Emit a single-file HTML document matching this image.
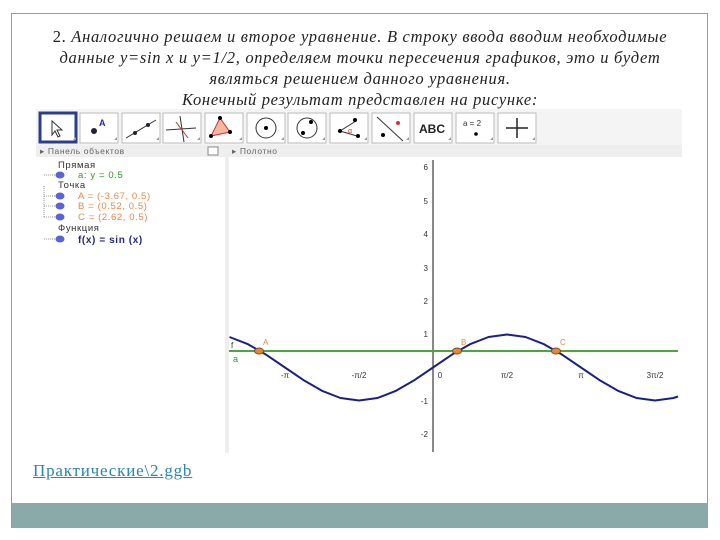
<!DOCTYPE html>
<html><head><meta charset="utf-8"><style>
body{margin:0;width:720px;height:540px;background:#fff;position:relative;overflow:hidden;font-family:"Liberation Sans",sans-serif}
.frame{position:absolute;left:11px;top:13px;width:697px;height:515px;border:1px solid #9a9a9a;border-bottom:none;box-sizing:border-box}
.bar{position:absolute;left:12px;top:503px;width:696px;height:25px;background:#8aa9a9}
.title{position:absolute;left:0px;width:720px;top:26px;text-align:center;font-family:"Liberation Serif",serif;font-style:italic;font-size:16.5px;letter-spacing:0.7px;line-height:21px;color:#222}
.link{position:absolute;left:33px;top:461px;font-family:"Liberation Serif",serif;font-size:17px;letter-spacing:0.8px;color:#2b86ad;text-decoration:underline}
</style></head><body>
<div class="frame"></div>
<div class="bar"></div>
<div class="title"><span style="font-style:normal">2.</span> Аналогично решаем и второе уравнение. В строку ввода вводим необходимые<br>данные y=sin x и y=1/2, определяем точки пересечения графиков, это и будет<br>являться решением данного уравнения.<br>Конечный результат представлен на рисунке:</div>
<svg style="position:absolute;left:0;top:0" width="720" height="540" font-family="Liberation Sans, sans-serif">
<rect x="36" y="109" width="646" height="36" fill="#f4f4f4"/>
<g fill="#fff" stroke="#bbb">
<rect x="80" y="113" width="38" height="30"/><rect x="122" y="113" width="38" height="30"/><rect x="163" y="113" width="38" height="30"/><rect x="205" y="113" width="38" height="30"/><rect x="247" y="113" width="38" height="30"/><rect x="288" y="113" width="38" height="30"/><rect x="330" y="113" width="38" height="30"/><rect x="372" y="113" width="38" height="30"/><rect x="414" y="113" width="38" height="30"/><rect x="456" y="113" width="38" height="30"/><rect x="498" y="113" width="38" height="30"/>
</g>
<rect x="40" y="113" width="36" height="29" fill="#fff" stroke="#2a3d8f" stroke-width="3"/>
<path d="M52 121 L52 135 L55 131 L58 137 L60 136 L57 130 L62 130 Z" fill="#fff" stroke="#333"/>
<circle cx="94" cy="131" r="3" fill="#223"/><text x="99" y="126" font-size="9" font-weight="bold" fill="#22c">A</text>
<path d="M126 138 L156 120" stroke="#333"/><circle cx="135" cy="133" r="2" fill="#223"/><circle cx="148" cy="125" r="2" fill="#223"/>
<path d="M166 130 L196 128 M180 116 L184 142" stroke="#333"/><path d="M176 122 L188 138" stroke="#c33"/>
<path d="M220 118 L211 136 L230 132 Z" fill="#f4b7a0" stroke="#c33"/><circle cx="220" cy="118" r="2"/><circle cx="211" cy="136" r="2"/><circle cx="230" cy="132" r="2"/>
<circle cx="266" cy="128" r="10" fill="none" stroke="#333"/><circle cx="266" cy="128" r="2"/>
<circle cx="307" cy="128" r="10" fill="none" stroke="#333"/><circle cx="303" cy="133" r="2"/><circle cx="311" cy="122" r="2"/>
<path d="M340 131 L356 121 M340 131 L357 136" stroke="#333"/><circle cx="340" cy="131" r="2"/><circle cx="358" cy="136" r="2"/><circle cx="355" cy="120" r="2"/><text x="348" y="133" font-size="7" fill="#c33">α</text>
<path d="M377 117 L403 141" stroke="#333"/><circle cx="383" cy="135" r="2"/><circle cx="398" cy="123" r="2" fill="#c33"/>
<text x="419" y="133" font-size="12" font-weight="bold" fill="#222">ABC</text>
<text x="463" y="126" font-size="8" fill="#333">a = 2</text><circle cx="476" cy="134" r="1.8"/>
<path d="M506 128 L528 128 M517 118 L517 138" stroke="#222" stroke-width="1.5"/>
<g fill="#999"><path d="M73 140 L76 140 L76 137Z M114 140 L117 140 L117 137Z M156 140 L159 140 L159 137Z M197 140 L200 140 L200 137Z M239 140 L242 140 L242 137Z M281 140 L284 140 L284 137Z M322 140 L325 140 L325 137Z M364 140 L367 140 L367 137Z M406 140 L409 140 L409 137Z M448 140 L451 140 L451 137Z M490 140 L493 140 L493 137Z M532 140 L535 140 L535 137Z"/></g>
<rect x="36" y="145" width="646" height="12" fill="#eee"/>
<text x="40" y="154" font-size="8.5" fill="#666" letter-spacing="0.6">▸  Панель объектов</text>
<rect x="208" y="147" width="10" height="8" fill="#fff" stroke="#888"/>
<text x="232" y="154" font-size="8.5" fill="#666" letter-spacing="0.6">▸  Полотно</text>
<rect x="225" y="157" width="4" height="296" fill="#eee"/>
<g stroke="#999" stroke-dasharray="1 1">
<path d="M44 175 L55 175 M44 196 L55 196 M44 206 L55 206 M44 217 L55 217 M44 239 L55 239 M44 186 L44 217"/>
</g>
<g fill="#5a63d8"><ellipse cx="60" cy="175" rx="4.5" ry="3.5"/><ellipse cx="60" cy="196" rx="4.5" ry="3.5"/><ellipse cx="60" cy="206" rx="4.5" ry="3.5"/><ellipse cx="60" cy="217" rx="4.5" ry="3.5"/><ellipse cx="60" cy="239" rx="4.5" ry="3.5"/></g>
<g font-size="9.5" letter-spacing="0.6">
<text x="58" y="168" fill="#333">Прямая</text>
<text x="78" y="178" fill="#2a9a2a">a: y = 0.5</text>
<text x="58" y="188" fill="#333">Точка</text>
<text x="78" y="199" fill="#e8884a">A = (-3.67, 0.5)</text>
<text x="78" y="209" fill="#e8884a">B = (0.52, 0.5)</text>
<text x="78" y="220" fill="#e8884a">C = (2.62, 0.5)</text>
<text x="58" y="231" fill="#333">Функция</text>
<text x="78" y="243" fill="#22268a" font-weight="bold" font-size="10">f(x) = sin (x)</text>
</g>
<path d="M433 160 L433 452" stroke="#111"/>
<path d="M229 351 L678 351" stroke="#4aa83a" stroke-width="2"/>
<g font-size="8" fill="#333" text-anchor="end">
<text x="428" y="170">6</text><text x="428" y="204">5</text><text x="428" y="237">4</text><text x="428" y="271">3</text><text x="428" y="304">2</text><text x="428" y="337">1</text><text x="428" y="404">-1</text><text x="428" y="437">-2</text>
</g>
<g font-size="8" fill="#333" text-anchor="middle">
<text x="285" y="378">-π</text><text x="359" y="378">-π/2</text><text x="440" y="378">0</text><text x="507" y="378">π/2</text><text x="581" y="378">π</text><text x="655" y="378">3π/2</text>
</g>
<polyline fill="none" stroke="#1a1f8a" stroke-width="2" stroke-linejoin="round" points="229.5,337 248,344.2 266.5,354.9 285,367.5 303.5,380.1 322,390.8 340.5,398 359,400.5 377.5,398 396,390.8 414.5,380.1 433,367.5 451.5,354.9 470,344.2 488.5,337 507,334.5 525.5,337 544,344.2 562.5,354.9 581,367.5 599.5,380.1 618,390.8 636.5,398 655,400.5 673.5,398 678,396.5"/>
<g fill="#e0883c" stroke="#8a4a1a"><ellipse cx="259" cy="351" rx="4.5" ry="3"/><ellipse cx="457" cy="351" rx="4.5" ry="3"/><ellipse cx="556" cy="351" rx="4.5" ry="3"/></g>
<g font-size="8" fill="#e8884a"><text x="263" y="345">A</text><text x="461" y="345">B</text><text x="560" y="345">C</text></g>
<text x="231" y="348" font-size="8" fill="#333">f</text>
<text x="233" y="362" font-size="9" fill="#2a9a2a">a</text>
</svg>
<div class="link">Практические\2.ggb</div>
</body></html>
